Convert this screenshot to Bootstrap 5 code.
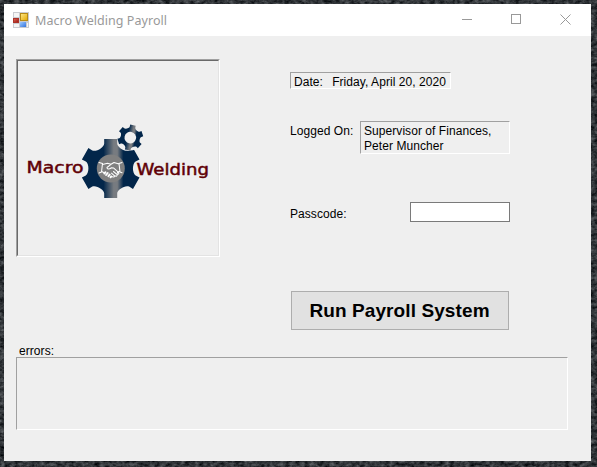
<!DOCTYPE html>
<html lang="en">
<head>
<meta charset="utf-8">
<meta name="viewport" content="width=device-width, initial-scale=1">
<title>Macro Welding Payroll</title>
<link href="https://cdn.jsdelivr.net/npm/bootstrap@5.3.0/dist/css/bootstrap.min.css" rel="stylesheet">
<style>
body{font:12px/15px "Liberation Sans",Arial,sans-serif;color:#000;background:#303236}
.desktop{display:grid;width:597px;height:467px}
.desktop>*{grid-area:1/1}
.win{width:587px;height:457px;margin:4px 0 0 4px;background:#efefef}
.titlebar{height:32px;background:#fff;color:#999;font:12.5px/32px "Noto Sans","Open Sans",sans-serif;padding-left:9px}
.titlebar .app-name{margin-left:6px;padding-top:1px;letter-spacing:.04px}
.controls{margin:0 20px 2px auto;gap:38px}
.form-area{height:425px;padding:23px 23px 31px 12px}
.upper{height:285px}
.logo-box{width:204px;height:198px;border:1px solid;border-color:#a0a0a0 #fff #fff #a0a0a0}
.logo-inner{width:202px;height:196px;border:1px solid;border-color:#696969 #e3e3e3 #e3e3e3 #696969}
.fields{width:220px;margin-left:70px;padding-top:13px}
.sunken{border:1px solid;border-color:#a0a0a0 #fff #fff #a0a0a0}
.date-box{width:161px;height:17px;padding-left:3px;line-height:18px;margin-bottom:32px;white-space:nowrap}
.fit{letter-spacing:.06px;white-space:nowrap}
.row-label{padding-top:3px}
.user-box{width:150px;height:33px;padding:2px 0 0 3px}
.pass-row{height:20px;margin-top:48px}
.pass-row .row-label{padding-top:5px}
.pass-input{width:100px;height:20px;border:1px solid #7a7a7a;border-radius:0;background:#fff;padding:0 3px}
.run-btn{width:218px;height:39px;margin:69px 0 0 1px;padding:0 1px 0 0;border:1px solid #adadad;border-radius:0;background:#e1e1e1;color:#000;font:bold 19px/38px "Liberation Sans",Arial,sans-serif;letter-spacing:.1px;white-space:nowrap}
.errors-label{margin-left:3px;height:13px;line-height:15px}
.errors-box{width:552px;height:73px}
</style>
<script src="https://cdn.jsdelivr.net/npm/bootstrap@5.3.0/dist/js/bootstrap.bundle.min.js"></script>
</head>
<body class="m-0 overflow-hidden">
<div class="desktop">
  <svg width="597" height="467" aria-hidden="true">
    <filter id="grain" x="0" y="0" width="100%" height="100%" color-interpolation-filters="sRGB">
      <feTurbulence type="fractalNoise" baseFrequency=".2 .3" numOctaves="3" seed="4"/>
      <feColorMatrix values=".5 0 0 0 -.06  .5 0 0 0 -.045  .5 0 0 0 -.03  0 0 0 0 1"/>
    </filter>
    <rect width="597" height="467" filter="url(#grain)"/>
  </svg>
  <main class="win d-flex flex-column">
    <header class="titlebar d-flex align-items-center">
      <svg width="16" height="16" viewBox="0 0 16 16">
        <defs>
          <linearGradient id="yel" x2="1" y2="1"><stop stop-color="#ffe98a"/><stop offset="1" stop-color="#e3a800"/></linearGradient>
          <linearGradient id="red" x2="1" y2="1"><stop stop-color="#e06a5e"/><stop offset="1" stop-color="#981208"/></linearGradient>
          <linearGradient id="blu" x2="1" y2="1"><stop stop-color="#9cc8ff"/><stop offset="1" stop-color="#3474dc"/></linearGradient>
        </defs>
        <rect width="16" height="16" fill="#c9cbd0"/>
        <path d="M1 1h5v4H1zM1 12h5v3H1zM14 11h1v4h-1z" fill="#f5f5f5"/>
        <rect x="7.5" y="1.500" width="7" height="7" fill="url(#yel)" stroke="#b78b16"/>
        <rect x=".5" y="6.500" width="5" height="4" fill="url(#red)" stroke="#ab3229"/>
        <rect x="7" y="10" width="6" height="5" fill="url(#blu)"/>
      </svg>
      <span class="app-name">Macro Welding Payroll</span>
      <div class="controls d-flex">
        <svg width="11" height="11"><path d="M0 5.500H10" stroke="#999"/></svg>
        <svg width="11" height="11"><rect x=".5" y=".5" width="9" height="9" fill="none" stroke="#999"/></svg>
        <svg width="11" height="11"><path d="M.5.5l10 10M10.500.5l-10 10" stroke="#999"/></svg>
      </div>
    </header>
    <section class="form-area">
      <div class="upper d-flex align-items-start">
        <div class="logo-box"><div class="logo-inner">
          <svg class="d-block" width="200" height="194" viewBox="18 61 200 194">
            <defs>
              <linearGradient id="steel" gradientUnits="userSpaceOnUse" x1="-30" x2="30" y1="0" y2="0"><stop offset=".38" stop-color="#02264a"/><stop offset=".55" stop-color="#777b80"/><stop offset=".61" stop-color="#777b80"/><stop offset=".71" stop-color="#02264a"/></linearGradient>
              <path id="gear" d="M-6.500-29.500H6.500V-25C6.500-21 14.900-16.100 18.400-18.100L22.300-20.400 28.800-9.100 24.900-6.900C21.400-4.900 21.400 4.900 24.900 6.900L28.800 9.100 22.300 20.400 18.400 18.100C14.900 16.100 6.500 21 6.500 25V29.500H-6.500V25C-6.500 21-14.900 16.100-18.400 18.100L-22.300 20.400-28.800 9.100-24.900 6.900C-21.400 4.900-21.400-4.900-24.900-6.900L-28.800-9.100-22.300-20.400-18.400-18.100C-14.900-16.100-6.500-21-6.500-25Z"/>
            </defs>
            <use href="#gear" transform="translate(110.700 168.500)" fill="url(#steel)"/>
            <circle cx="130.300" cy="138" r="12.500" fill="#efefef"/>
            <g transform="translate(130.300 137.600) rotate(12) scale(.43)"><use href="#gear" fill="url(#steel)"/><circle r="13.500" fill="#efefef"/></g>
            <circle cx="110.800" cy="168.500" r="14" fill="#808080"/>
            <g fill="none" stroke="#fff" stroke-linejoin="round" stroke-linecap="round">
              <path d="M99 162.500l3.500 1-1 8.500-2.500 1M122 162.500l-3 1 1 8.500 2 .8M102.500 164.500l5-1.200 3.500 1 3-1.800 5 1.500M111 164.300l-4 3.200c0 2 2 2 4.500.2l2 .2 5 4.500c1 1 0 2.300-1.500 1.300M101.700 171.500l3 1.500M119 171.500l-1.500 1M113.500 171.500l3.700 3.200c0 1.700-1.500 1.800-2.500 1M111.500 173.200l3 2.700c0 1.400-1.700 1.600-3.300.3" stroke-width="1.050"/>
              <path d="M105.500 172.200l-1.200 1.400M107.700 173l-1.600 2M109.700 174.500l-1.300 1.700M111.200 176.500l-.7.800" stroke-width="1.900"/>
            </g>
            <g font-family="'DejaVu Sans',sans-serif" font-size="15" fill="#600006" stroke="#600006" stroke-width=".45">
              <text x="26.500" y="172.500" textLength="57" lengthAdjust="spacingAndGlyphs">Macro</text>
              <text x="136.500" y="175.300" textLength="72.500" lengthAdjust="spacingAndGlyphs">Welding</text>
            </g>
          </svg>
        </div></div>
        <div class="fields">
          <div class="sunken date-box d-flex"><span class="fit">Date:</span><span class="fit ms-auto me-1">Friday, April 20, 2020</span></div>
          <div class="d-flex justify-content-between"><span class="fit row-label">Logged On:</span><div class="sunken user-box fit">Supervisor of Finances,<br>Peter Muncher</div></div>
          <div class="pass-row d-flex justify-content-between"><label class="fit row-label" for="passcode">Passcode:</label><input id="passcode" type="password" class="form-control pass-input"></div>
          <button type="button" class="btn run-btn">Run Payroll System</button>
        </div>
      </div>
      <div class="errors-label fit">errors:</div>
      <div class="sunken errors-box"></div>
    </section>
  </main>
</div>
</body>
</html>
